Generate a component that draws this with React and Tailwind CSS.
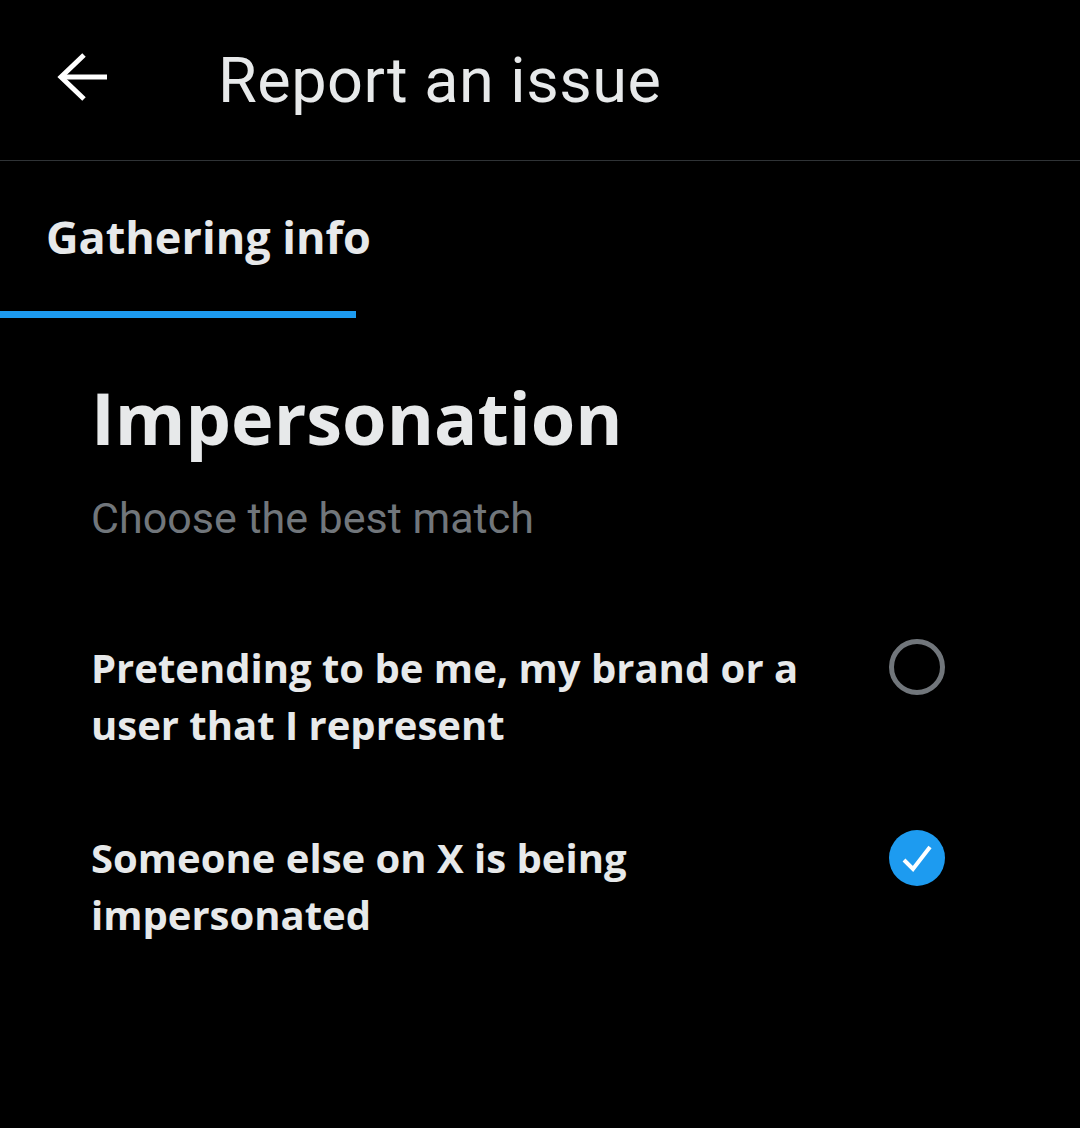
import React, { useState } from "react";

const BackArrow = () => (
  <svg width="56" height="56" viewBox="0 0 56 56" fill="none" stroke="#ffffff" strokeWidth={5} strokeLinecap="butt" strokeLinejoin="miter">
    <path d="M7 28H52" />
    <path d="M29 6L6 28l23 22" />
  </svg>
);

const Radio = ({ checked }) =>
  checked ? (
    <svg width="56" height="56" viewBox="0 0 56 56">
      <circle cx="28" cy="28" r="28" fill="#1d9bf0" />
      <path d="M15 30l9 9L41 17" fill="none" stroke="#ffffff" strokeWidth={4} />
    </svg>
  ) : (
    <svg width="56" height="56" viewBox="0 0 56 56">
      <circle cx="28" cy="28" r="25.5" fill="none" stroke="#71767b" strokeWidth={5} />
    </svg>
  );

const options = [
  { id: "me", label: "Pretending to be me, my brand or a user that I represent" },
  { id: "other", label: "Someone else on X is being impersonated" },
];

const bold = { fontFamily: "'Open Sans', Roboto, sans-serif" };

export default function App() {
  const [selected, setSelected] = useState("other");

  return (
    <div className="w-[1080px] h-[1128px] bg-black text-[#e7e9ea] overflow-hidden" style={{ fontFamily: "Roboto, 'Noto Sans', sans-serif" }}>
      {/* Header */}
      <div className="h-[161px] flex items-center border-b border-[#2f3336]">
        <div className="pl-[55px] w-[218px] flex items-center -mt-[7px]">
          <BackArrow />
        </div>
        <h1 className="text-[63px] leading-none font-normal text-[#e7e9ea] tracking-[0.5px]">Report an issue</h1>
      </div>

      {/* Tab */}
      <div className="w-[356px]">
        <div className="h-[150px] flex items-center pl-[46px]">
          <span className="text-[45px] font-bold leading-none whitespace-nowrap" style={bold}>Gathering info</span>
        </div>
        <div className="h-[7px] bg-[#1d9bf0]" />
      </div>

      {/* Content */}
      <div className="pl-[91px] pr-[135px] pt-[63px]">
        <h2 className="text-[72px] font-bold leading-none" style={bold}>Impersonation</h2>
        <p className="mt-[44px] text-[43px] leading-none text-[#71767b]">Choose the best match</p>

        <div className="mt-[99px] flex flex-col gap-[76px]">
          {options.map((o, i) => (
            <button
              key={o.id}
              onClick={() => setSelected(o.id)}
              className="flex items-start justify-between text-left"
            >
              <span className="w-[730px] text-[40px] font-bold leading-[57px]" style={bold}>{o.label}</span>
              <span className={i === 0 ? "" : "mt-[1px]"}>
                <Radio checked={selected === o.id} />
              </span>
            </button>
          ))}
        </div>
      </div>
    </div>
  );
}
